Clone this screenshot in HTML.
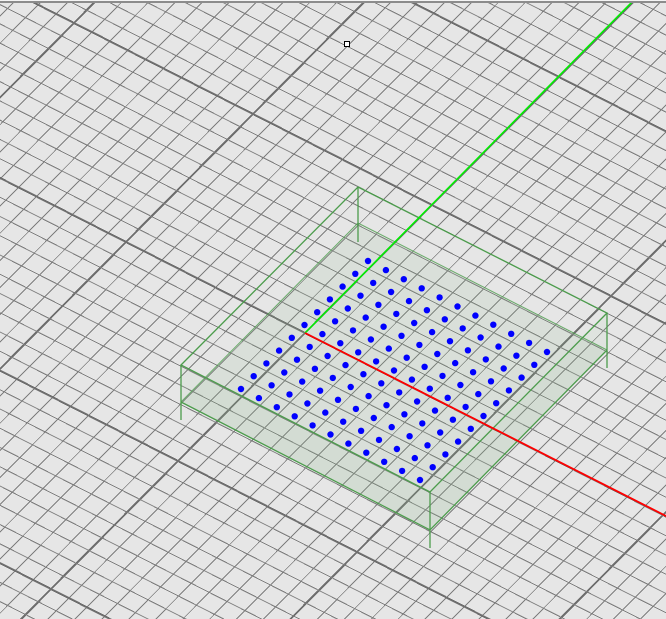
<!DOCTYPE html>
<html><head><meta charset="utf-8"><style>
html,body{margin:0;padding:0;background:#e6e6e6;overflow:hidden;width:666px;height:619px}
#w{width:666px;height:619px;overflow:hidden;position:relative}
svg{display:block;overflow:hidden}
</style></head><body><div id="w">
<svg id="s" width="666" height="619" viewBox="0 0 666 619" xmlns="http://www.w3.org/2000/svg">
<rect width="666" height="619" fill="#e6e6e6"/>
<g id="grid" shape-rendering="crispEdges"></g>
<polygon points="358,223 607,350 430,530 181,402" fill="rgba(140,185,140,0.14)"/>
<polygon points="181,365 430,492 430,530 181,402" fill="rgba(140,185,140,0.08)"/>
<polygon points="430,492 607,313 607,350 430,530" fill="rgba(140,185,140,0.08)"/>
<g stroke="#4c9c4c" stroke-width="1.3" fill="none">
<polygon points="358,187 607,313 430,492 181,365"/>
<polyline points="181,402 430,530 607,350"/>
<polyline points="181,402 358,223 607,350" stroke-width="1" opacity="0.8"/>
<line x1="358" y1="187" x2="358" y2="242"/>
<line x1="181" y1="365" x2="181" y2="420"/>
<line x1="430" y1="492" x2="430" y2="548"/>
<line x1="607" y1="313" x2="607" y2="368"/>
</g>
<line x1="305" y1="333" x2="635" y2="-1" stroke="#00f000" stroke-width="1.6"/>
<line x1="305" y1="333" x2="670" y2="518" stroke="#ff0000" stroke-width="1.8"/>
<g id="dots" fill="#0000ff"></g>
<rect x="344.5" y="41.5" width="5" height="5" fill="#fff" stroke="#000" stroke-width="1"/>
<rect x="0" y="0" width="666" height="1" fill="#f4f4f4"/>
<rect x="0" y="1" width="666" height="2" fill="#8c8c8c"/>
</svg></div>
<script>
var NS="http://www.w3.org/2000/svg";
var g=document.getElementById('grid');
var O=[305,333],ex=[17.9,9.1],ey=[12.7,-12.8];
function P(a,b){return [O[0]+a*ex[0]+b*ey[0],O[1]+a*ex[1]+b*ey[1]];}
function L(p,q,maj){var l=document.createElementNS(NS,'line');l.setAttribute('x1',p[0].toFixed(1));l.setAttribute('y1',p[1].toFixed(1));l.setAttribute('x2',q[0].toFixed(1));l.setAttribute('y2',q[1].toFixed(1));l.setAttribute('stroke',maj?'#6e6e6e':'#7e7e7e');l.setAttribute('stroke-width',maj?'2':'1');g.appendChild(l);}
var R=60;
for(var a=-R;a<=R;a++){L(P(a,-R),P(a,R),a%10==0);}
for(var b=-R;b<=R;b++){L(P(-R,b),P(R,b),b%10==0);}
var d=document.getElementById('dots');
var T=[368,261],Lf=[241,389],Bt=[420,480],Rt=[547,352];
for(var i=0;i<11;i++)for(var j=0;j<11;j++){
 var u=i/10,v=j/10;
 var x=(1-u)*(1-v)*T[0]+u*(1-v)*Rt[0]+u*v*Bt[0]+(1-u)*v*Lf[0];
 var y=(1-u)*(1-v)*T[1]+u*(1-v)*Rt[1]+u*v*Bt[1]+(1-u)*v*Lf[1];
 var c=document.createElementNS(NS,'circle');c.setAttribute('cx',x.toFixed(1));c.setAttribute('cy',y.toFixed(1));c.setAttribute('r','3.2');d.appendChild(c);}
</script>
</body></html>
